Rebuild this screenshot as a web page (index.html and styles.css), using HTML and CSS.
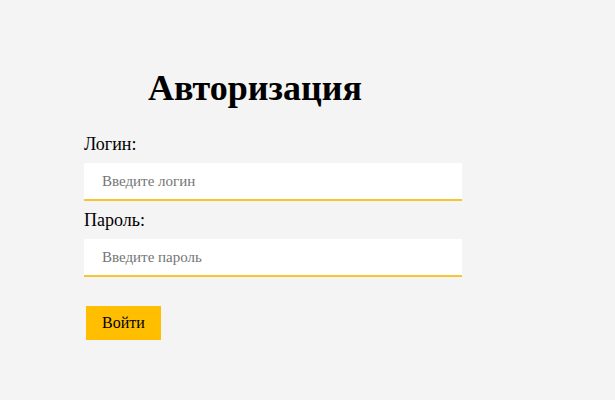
FILE: index.html
```html
<!DOCTYPE html>
<html lang="ru">
<head>
    <meta charset="UTF-8">
    <meta name="viewport" content="width=device-width, initial-scale=1.0">
    <title>Авторизация</title>
    <link rel="stylesheet" href="styles.css">
</head>
<body>
    <form class="login-form">
        <h1>Авторизация</h1>
        <label for="login">Логин:</label>
        <input type="text" id="login" placeholder="Введите логин">
        <label for="password">Пароль:</label>
        <input type="password" id="password" placeholder="Введите пароль">
        <button type="submit">Войти</button>
    </form>
</body>
</html>
```

FILE: styles.css
```css
body {
    margin: 0;
    background: #f4f4f4;
    font-family: "Liberation Serif", "Times New Roman", serif;
}
.login-form {
    width: 342px;
    margin-left: 84px;
    padding-top: 67px;
}
h1 {
    margin: 0 0 26px;
    font-size: 36px;
    text-align: center;
}
label {
    display: block;
    font-size: 18px;
    line-height: 1;
    margin-bottom: 10px;
}
input {
    display: block;
    box-sizing: border-box;
    width: 378px;
    height: 38px;
    padding: 0 0 0 18px;
    margin-bottom: 10px;
    border: none;
    border-bottom: 2px solid #f5c62f;
    background: #fff;
    font-family: inherit;
    font-size: 15px;
}
input::placeholder {
    color: #757575;
}
button {
    margin: 19px 0 0 2px;
    padding: 0 16px;
    height: 34px;
    border: none;
    background: #ffbf00;
    font-family: inherit;
    font-size: 16px;
    cursor: pointer;
}
```
